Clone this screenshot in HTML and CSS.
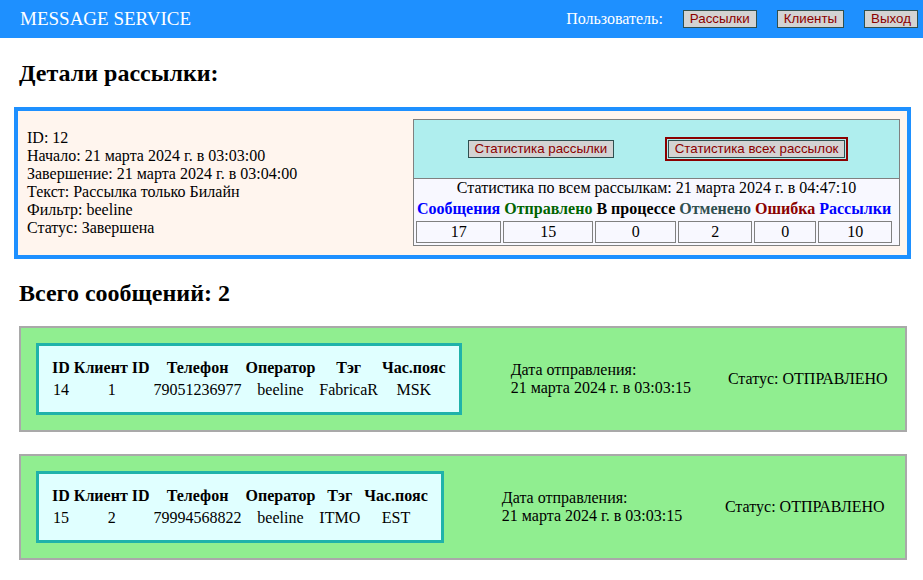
FILE: index.html
```html
<!DOCTYPE html>
<html lang="ru">
<head>
<meta charset="utf-8">
<title>Message Service</title>
<link rel="stylesheet" href="styles.css">
</head>
<body>
<header class="topbar">
  <div class="brand">MESSAGE SERVICE</div>
  <nav class="user-nav">
    <span class="user-label">Пользователь:</span>
    <button class="btn">Рассылки</button>
    <button class="btn">Клиенты</button>
    <button class="btn">Выход</button>
  </nav>
</header>
<main class="content">
  <h2 class="section-title section-title-top">Детали рассылки:</h2>
  <section class="mailing-card">
    <div class="mailing-info">
      <div>ID: 12</div>
      <div>Начало: 21 марта 2024 г. в 03:03:00</div>
      <div>Завершение: 21 марта 2024 г. в 03:04:00</div>
      <div>Текст: Рассылка только Билайн</div>
      <div>Фильтр: beeline</div>
      <div>Статус: Завершена</div>
    </div>
    <div class="stats-panel">
      <div class="stats-actions">
        <button class="btn">Статистика рассылки</button>
        <button class="btn btn-active">Статистика всех рассылок</button>
      </div>
      <div class="stats-body">
        <div class="stats-caption">Статистика по всем рассылкам: 21 марта 2024 г. в 04:47:10</div>
        <table class="stats-table">
          <thead>
            <tr>
              <th class="c-blue">Сообщения</th>
              <th class="c-green">Отправлено</th>
              <th class="c-black">В процессе</th>
              <th class="c-slate">Отменено</th>
              <th class="c-red">Ошибка</th>
              <th class="c-blue">Рассылки</th>
            </tr>
          </thead>
          <tbody>
            <tr><td>17</td><td>15</td><td>0</td><td>2</td><td>0</td><td>10</td></tr>
          </tbody>
        </table>
      </div>
    </div>
  </section>

  <h2 class="section-title section-title-list">Всего сообщений: 2</h2>

  <section class="message-card">
    <div class="msg-client">
      <div class="client-box">
        <table class="client-table">
          <thead><tr><th>ID</th><th>Клиент ID</th><th>Телефон</th><th>Оператор</th><th>Тэг</th><th>Час.пояс</th></tr></thead>
          <tbody><tr><td>14</td><td>1</td><td>79051236977</td><td>beeline</td><td>FabricaR</td><td>MSK</td></tr></tbody>
        </table>
      </div>
    </div>
    <div class="msg-date"><div class="msg-date-text">Дата отправления:<br>21 марта 2024 г. в 03:03:15</div></div>
    <div class="msg-status">Статус: ОТПРАВЛЕНО</div>
  </section>

  <section class="message-card">
    <div class="msg-client">
      <div class="client-box">
        <table class="client-table">
          <thead><tr><th>ID</th><th>Клиент ID</th><th>Телефон</th><th>Оператор</th><th>Тэг</th><th>Час.пояс</th></tr></thead>
          <tbody><tr><td>15</td><td>2</td><td>79994568822</td><td>beeline</td><td>ITMO</td><td>EST</td></tr></tbody>
        </table>
      </div>
    </div>
    <div class="msg-date"><div class="msg-date-text">Дата отправления:<br>21 марта 2024 г. в 03:03:15</div></div>
    <div class="msg-status">Статус: ОТПРАВЛЕНО</div>
  </section>
</main>
</body>
</html>
```
FILE: styles.css
```css
html, body {
  margin: 0;
  padding: 0;
  background: #ffffff;
  color: #000000;
  font-family: "Liberation Serif", "Times New Roman", serif;
  font-size: 16px;
}

.topbar {
  display: flex;
  align-items: center;
  justify-content: space-between;
  height: 38px;
  padding: 0 5px 0 20px;
  background: #1e90ff;
  color: #ffffff;
}

.brand {
  font-size: 19px;
}

.user-nav {
  display: flex;
  align-items: center;
}

.user-label {
  font-size: 16px;
}

.user-nav .btn {
  margin-left: 20px;
}

.btn {
  font-family: "Liberation Sans", Arial, sans-serif;
  font-size: 13.333px;
  line-height: 14px;
  padding: 1px 6px;
  border: 1px solid #2f4f4f;
  background: #d3d3d3;
  color: #8b0000;
  border-radius: 0;
}

.btn-active {
  outline: 2px solid #8b0000;
  outline-offset: 1px;
}

.content {
  padding: 0 12px 0 14px;
}

.section-title {
  font-size: 24px;
  line-height: 28px;
  font-weight: bold;
  margin: 20px 0 20px 5px;
}

.section-title-top {
  margin-top: 21px;
  margin-bottom: 20px;
}

.section-title-list {
  margin-bottom: 19px;
}

.mailing-card {
  display: flex;
  align-items: center;
  justify-content: space-between;
  border: 4px solid #1e90ff;
  background: #fff5ee;
  padding: 8px 7px 9px 9px;
}

.stats-panel {
  width: 487px;
  box-sizing: border-box;
  border: 1px solid #808080;
}

.stats-actions {
  display: flex;
  justify-content: space-evenly;
  align-items: center;
  height: 58px;
  background: #afeeee;
  border-bottom: 1px solid #808080;
}

.stats-body {
  background: #f8f8ff;
}

.stats-caption {
  text-align: center;
}

.stats-table {
  border-spacing: 2px;
}

.stats-table th {
  padding: 1px;
  font-weight: bold;
}

.stats-table td {
  padding: 1px;
  border: 1px solid #808080;
  text-align: center;
}

.c-blue { color: #0000ff; }
.c-green { color: #006400; }
.c-black { color: #000000; }
.c-slate { color: #2f4f4f; }
.c-red { color: #8b0000; }

.message-card {
  display: flex;
  align-items: center;
  margin: 19px 4px 22px 5px;
  padding: 15px 0 15px 15px;
  border: 2px solid #a9a9a9;
  background: #90ee90;
}

.msg-client {
  flex: 1 1 auto;
}

.client-box {
  display: inline-block;
  vertical-align: top;
  border: 3px solid #20b2aa;
  background: #e0ffff;
  padding: 10px 10px;
}

.client-table {
  border-spacing: 2px;
}

.client-table th,
.client-table td {
  padding: 1px;
  text-align: center;
}

.msg-date {
  flex: 1 1 auto;
  display: flex;
  justify-content: center;
}

.msg-date-text {
  text-align: left;
  margin-right: 4px;
}

.msg-status {
  flex: 1 1 auto;
  text-align: center;
  margin-right: 1px;
}
```
